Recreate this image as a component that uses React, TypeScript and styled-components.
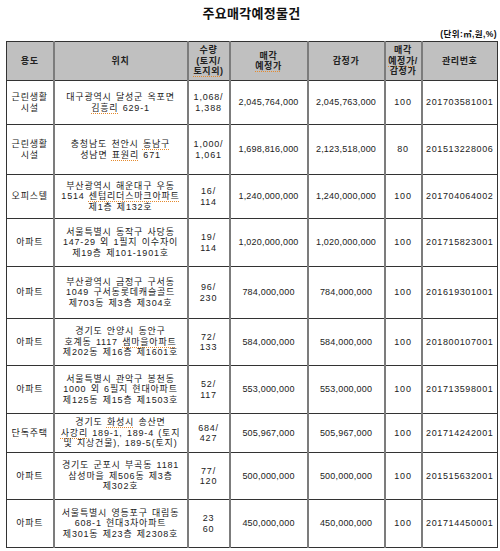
import React from 'react';
import styled, { createGlobalStyle } from 'styled-components';

const GlobalStyle = createGlobalStyle`
  body {
    margin: 0;
    background: #fff;
    font-family: 'Liberation Sans', 'Noto Sans CJK KR', sans-serif;
    color: #222;
  }
`;

type Item = {
  use: React.ReactNode;
  loc: React.ReactNode;
  qty: React.ReactNode;
  sale: string;
  appraisal: string;
  ratio: string;
  code: string;
  h: number;
};

const items: Item[] = [
  {
    use: <>근린생활<br />시설</>,
    loc: <>대구광역시 달성군 옥포면<br /><Spell>김흥리</Spell> 629-1</>,
    qty: <>1,068/<br />1,388</>,
    sale: '2,045,764,000',
    appraisal: '2,045,763,000',
    ratio: '100',
    code: '201703581001',
    h: 44,
  },
  {
    use: <>근린생활<br />시설</>,
    loc: <>충청남도 천안시 <Spell>동남구</Spell><br />성남면 <Spell>표원리</Spell> 671</>,
    qty: <>1,000/<br />1,061</>,
    sale: '1,698,816,000',
    appraisal: '2,123,518,000',
    ratio: '80',
    code: '201513228006',
    h: 50,
  },
  {
    use: '오피스텔',
    loc: <>부산광역시 해운대구 우동<br />1514 <Spell>센텀리더스마크아파트</Spell><br />제1층 제132호</>,
    qty: <>16/<br />114</>,
    sale: '1,240,000,000',
    appraisal: '1,240,000,000',
    ratio: '100',
    code: '201704064002',
    h: 44,
  },
  {
    use: '아파트',
    loc: <>서울특별시 동작구 사당동<br />147-29 외 1필지 이수자이<br />제19층 제101-1901호</>,
    qty: <>19/<br />114</>,
    sale: '1,020,000,000',
    appraisal: '1,020,000,000',
    ratio: '100',
    code: '201715823001',
    h: 48,
  },
  {
    use: '아파트',
    loc: <>부산광역시 금정구 구서동<br />1049 구서동롯데캐슬골드<br />제703동 제3층 제304호</>,
    qty: <>96/<br />230</>,
    sale: '784,000,000',
    appraisal: '784,000,000',
    ratio: '100',
    code: '201619301001',
    h: 52,
  },
  {
    use: '아파트',
    loc: <>경기도 안양시 동안구<br />호계동 1117 <Spell>샘마을아파트</Spell><br />제202동 제16층 제1601호</>,
    qty: <>72/<br />133</>,
    sale: '584,000,000',
    appraisal: '584,000,000',
    ratio: '100',
    code: '201800107001',
    h: 47,
  },
  {
    use: '아파트',
    loc: <>서울특별시 관악구 봉천동<br />1000 외 6필지 현대아파트<br />제125동 제15층 제1503호</>,
    qty: <>52/<br />117</>,
    sale: '553,000,000',
    appraisal: '553,000,000',
    ratio: '100',
    code: '201713598001',
    h: 48,
  },
  {
    use: '단독주택',
    loc: <>경기도 <Spell>화성시</Spell> 송산면<br /><Spell>사강리</Spell> 189-1, 189-4 (토지<br />및 지상건물), 189-5(토지)</>,
    qty: <>684/<br />427</>,
    sale: '505,967,000',
    appraisal: '505,967,000',
    ratio: '100',
    code: '201714242001',
    h: 39,
  },
  {
    use: '아파트',
    loc: <>경기도 군포시 부곡동 1181<br />삼성마을 제506동 제3층<br />제302호</>,
    qty: <>77/<br />120</>,
    sale: '500,000,000',
    appraisal: '500,000,000',
    ratio: '100',
    code: '201515632001',
    h: 47,
  },
  {
    use: '아파트',
    loc: <>서울특별시 영등포구 대림동<br />608-1 현대3차아파트<br />제301동 제23층 제2308호</>,
    qty: <>23<br />60</>,
    sale: '450,000,000',
    appraisal: '450,000,000',
    ratio: '100',
    code: '201714450001',
    h: 48,
  },
];

const colWidths = [47, 134, 42, 78, 77, 37, 76];

export default function App() {
  return (
    <Page>
      <GlobalStyle />
      <Title>주요매각예정물건</Title>
      <Unit>(단위:㎡,원,%)</Unit>
      <Table>
        <colgroup>
          {colWidths.map((w, i) => (
            <col key={i} style={{ width: w }} />
          ))}
        </colgroup>
        <thead>
          <tr>
            <Th>용도</Th>
            <Th>위치</Th>
            <Th>수량<br />(토지/<br /><Spell>토지외</Spell>)</Th>
            <Th>매각<br /><Spell>예정가</Spell></Th>
            <Th>감정가</Th>
            <Th>매각<br /><Spell>예정가</Spell>/<br />감정가</Th>
            <Th>관리번호</Th>
          </tr>
        </thead>
        <tbody>
          {items.map((it, i) => (
            <Tr key={i} $h={it.h}>
              <Td>{it.use}</Td>
              <Td>{it.loc}</Td>
              <Td>{it.qty}</Td>
              <Td $kind="num">{it.sale}</Td>
              <Td $kind="num">{it.appraisal}</Td>
              <Td>{it.ratio}</Td>
              <Td $kind="code">{it.code}</Td>
            </Tr>
          ))}
        </tbody>
      </Table>
    </Page>
  );
}

function Spell({ children }: { children: React.ReactNode }) {
  return <SpellMark>{children}</SpellMark>;
}

const Page = styled.div`
  width: 500px;
  padding: 0 3px 0 6px;
  box-sizing: border-box;
`;

const Title = styled.h1`
  margin: 0;
  padding-top: 5px;
  height: 19px;
  font-size: 13px;
  font-weight: bold;
  text-align: center;
  color: #111;
  letter-spacing: 0.3px;
  line-height: 17px;
`;

const Unit = styled.div`
  height: 17px;
  font-size: 8.5px;
  font-weight: bold;
  text-align: right;
  line-height: 20px;
  letter-spacing: 0.4px;
  color: #111;
`;

const Table = styled.table`
  width: 491px;
  table-layout: fixed;
  border-collapse: collapse;
  border: 1px solid #333;
`;

const SpellMark = styled.span`
  text-decoration: underline dotted #e58a2e;
  text-decoration-thickness: 1px;
  text-underline-offset: 1.5px;
`;

const Th = styled.th`
  height: 38px;
  padding: 0;
  background: #c0c0c0;
  font-size: 9px;
  font-weight: bold;
  line-height: 10.5px;
  letter-spacing: 0.6px;
  color: #222;
  text-align: center;
  vertical-align: middle;
  border-top: 1px solid #333;
  border-bottom: 1px solid #333;
  border-left: 2px solid #7c7c7c;
  border-right: 2px solid #7c7c7c;

  &:first-child {
    border-left: 1px solid #333;
  }
  &:last-child {
    border-right: 1px solid #333;
  }
`;

const Tr = styled.tr<{ $h: number }>`
  height: ${(p) => p.$h}px;
`;

const Td = styled.td<{ $kind?: 'num' | 'code' }>`
  padding: 0;
  font-size: 9px;
  line-height: 10.5px;
  letter-spacing: ${(p) => (p.$kind === 'num' ? '0.2px' : p.$kind === 'code' ? '0.6px' : '0.8px')};
  word-spacing: ${(p) => (p.$kind ? '0' : '1px')};
  color: #222;
  text-align: center;
  vertical-align: middle;
  white-space: nowrap;
  border-top: 1px solid #333;
  border-bottom: 1px solid #333;
  border-left: 2px solid #7c7c7c;
  border-right: 2px solid #7c7c7c;

  &:first-child {
    border-left: 1px solid #333;
  }
  &:last-child {
    border-right: 1px solid #333;
  }
`;
